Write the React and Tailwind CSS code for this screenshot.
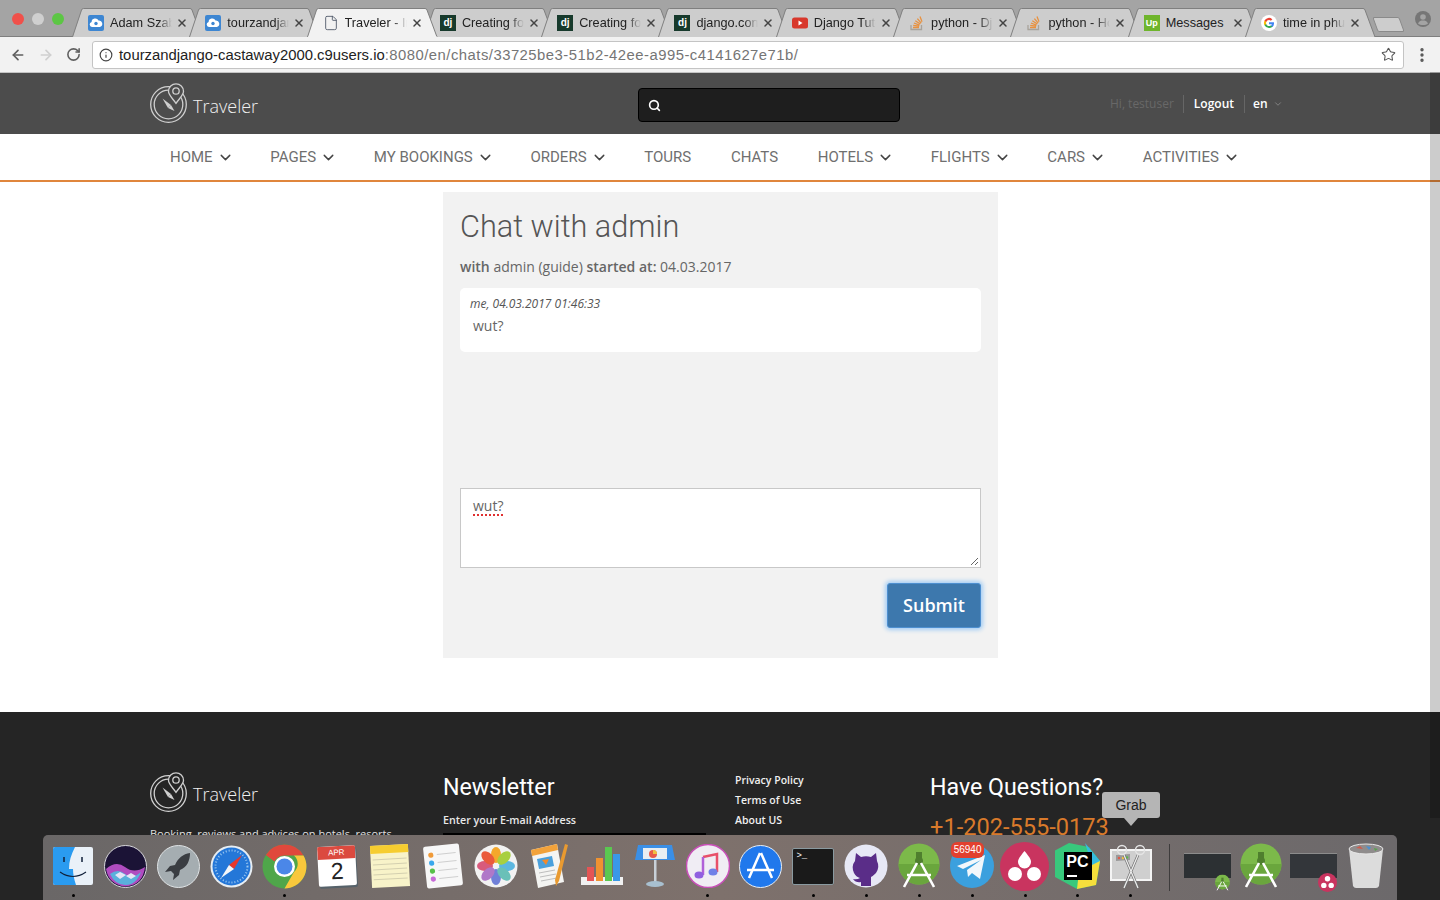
import { ChevronDown, Search, Star, EllipsisVertical, ArrowLeft, ArrowRight, RotateCw, Info, X, File } from "lucide-react";

const tabs = [
  { title: "Adam Szabo", icon: "cloud" },
  { title: "tourzandjango", icon: "cloud" },
  { title: "Traveler - Interface", icon: "file", active: true },
  { title: "Creating for", icon: "dj" },
  { title: "Creating for", icon: "dj" },
  { title: "django.contrib", icon: "dj" },
  { title: "Django Tutorial", icon: "yt" },
  { title: "python - Django", icon: "so" },
  { title: "python - How", icon: "so" },
  { title: "Messages", icon: "up", plain: true },
  { title: "time in phuket", icon: "g" },
];

const navItems = [
  { label: "HOME", caret: true },
  { label: "PAGES", caret: true },
  { label: "MY BOOKINGS", caret: true },
  { label: "ORDERS", caret: true },
  { label: "TOURS" },
  { label: "CHATS" },
  { label: "HOTELS", caret: true },
  { label: "FLIGHTS", caret: true },
  { label: "CARS", caret: true },
  { label: "ACTIVITIES", caret: true },
];

const TabIcon = ({ type }) => {
  if (type === "file") return <File className="w-4 h-4 text-gray-600" strokeWidth={1.3} />;
  if (type === "cloud")
    return (
      <svg width="16" height="16" viewBox="0 0 16 16">
        <rect width="16" height="16" rx="2" fill="#3d86d2" />
        <path d="M4 12a2.6 2.6 0 0 1-.4-5.1A3.6 3.6 0 0 1 10.5 5.6 3.3 3.3 0 0 1 12 12z" fill="#fff" />
        <circle cx="8" cy="8.5" r="1.7" fill="#3d86d2" />
      </svg>
    );
  if (type === "dj")
    return (
      <div className="w-4 h-4 bg-[#173a2c] text-white text-[10px] font-bold leading-4 text-center font-['Liberation_Sans',sans-serif]">
        dj
      </div>
    );
  if (type === "yt")
    return (
      <svg width="16" height="16" viewBox="0 0 16 16">
        <rect y="2.5" width="16" height="11" rx="2.5" fill="#d8382c" />
        <path d="M6.5 5.5v5l4-2.5z" fill="#fff" />
      </svg>
    );
  if (type === "so")
    return (
      <svg width="16" height="16" viewBox="0 0 16 16" fill="none" stroke="#e8913f" strokeWidth="1.3">
        <path d="M2 10v4.500h10.500V10" stroke="#a8a39b" />
        <path d="M4 12.500h6M4.200 10.300l6 .8M4.900 8l5.600 2.200M6.300 5.700l5 3.300M8.400 3.600l3.800 4.500M11 1.500l2 5.200" />
      </svg>
    );
  if (type === "up")
    return (
      <div className="w-4 h-4 bg-[#6fb52c] text-white text-[9px] font-bold leading-4 text-center font-['Liberation_Sans',sans-serif]">
        Up
      </div>
    );
  return (
    <svg width="16" height="16" viewBox="0 0 16 16">
      <circle cx="8" cy="8" r="8" fill="#fff" />
      <path d="M13 8.200c0-.4 0-.7-.1-1H8v2h2.800a2.400 2.400 0 0 1-1 1.600v1.300h1.700A5 5 0 0 0 13 8.200z" fill="#4285f4" />
      <path d="M8 13a5 5 0 0 0 3.500-1.200l-1.700-1.300a3 3 0 0 1-4.600-1.600H3.500v1.400A5 5 0 0 0 8 13z" fill="#34a853" />
      <path d="M5.200 8.900a3 3 0 0 1 0-1.900V5.600H3.500a5 5 0 0 0 0 4.700z" fill="#fbbc05" />
      <path d="M8 5a2.700 2.700 0 0 1 1.900.7l1.500-1.500A5 5 0 0 0 3.500 5.600L5.200 7A3 3 0 0 1 8 5z" fill="#ea4335" />
    </svg>
  );
};

const Tab = ({ tab }) => (
  <div className={`relative w-[117.300px] h-full shrink-0 flex items-center pl-[16px] ${tab.active ? "z-10" : ""}`}>
    <svg className="absolute left-0 top-0 w-[131px] h-[30px]" viewBox="0 0 131 30">
      <path
        d="M0.500 29 L9.500 2 Q10 0.500 11.500 0.500 H118 Q119.500 0.500 120 2 L130 29"
        fill={tab.active ? "#f2f2f2" : "#cdcdcd"}
        stroke="#7f7f7f"
        strokeWidth="1"
      />
      {tab.active && <rect x="1" y="28.500" width="129" height="2" fill="#f2f2f2" />}
    </svg>
    <div className="relative shrink-0 w-4 h-4 mr-[6px] flex items-center justify-center">
      <TabIcon type={tab.icon} />
    </div>
    <div className={`relative w-[62px] shrink-0 overflow-hidden whitespace-nowrap text-[12.700px] leading-[16px] pt-[1px] text-[#222] ${tab.plain ? "" : "[mask-image:linear-gradient(to_right,black_78%,transparent_100%)]"}`}>
      {tab.title}
    </div>
    <X className="relative w-[12px] h-[12px] ml-[4px] text-[#444] shrink-0" strokeWidth={3} />
  </div>
);

const Logo = ({ bg }) => (
  <svg width="38" height="40" viewBox="0 0 38 40" fill="none" stroke="#cfcfcf" strokeWidth="1.300">
    <circle cx="18.500" cy="21.500" r="17.800" />
    <circle cx="18.500" cy="21.500" r="14.300" />
    <path d="M26 0.800a7.500 7.500 0 0 0-7.500 7.500c0 4 4.500 7.500 7.500 12 3-4.500 7.500-8 7.500-12A7.500 7.500 0 0 0 26 0.800z" fill={bg} />
    <circle cx="26" cy="8" r="3.200" />
    <path d="M12.500 15.500l8.500 6.500-3 3z" fill="#cfcfcf" stroke="none" />
    <path d="M18 25l3-3 3.500 6z" fill="#cfcfcf" stroke="none" />
  </svg>
);

const DockApp = ({ children, dot }) => (
  <div className="relative w-[52.900px] h-[50px] shrink-0 flex items-center justify-center">
    {children}
    {dot && <span className="absolute left-[25px] bottom-[-6px] w-[3px] h-[3px] rounded-full bg-black" />}
  </div>
);

const androidIcon = (
  <svg width="42" height="46" viewBox="0 0 42 46">
    <circle cx="21" cy="21" r="20.500" fill="#7cb94a" />
    <path d="M21 41.500A20.500 20.500 0 0 1 .500 21H41.500A20.500 20.500 0 0 1 21 41.500z" fill="#6aa63d" />
    <rect x="18" y="9" width="6" height="6" fill="#4f7f2e" />
    <circle cx="21" cy="18" r="4" fill="#4f7f2e" />
    <path d="M19 20L6 44M23 20L36 44M9 32h24" stroke="#fff" strokeWidth="2.600" fill="none" />
  </svg>
);

const Dock = () => (
  <div className="absolute left-[43px] top-[835px] w-[1354px] h-[65px] rounded-t-[5px] bg-gradient-to-r from-[#6a6767] via-[#7e716c] to-[#6c696b] flex items-start pl-[3.500px] pt-[6px]">
    <DockApp dot>
      <svg width="40" height="38" viewBox="0 0 40 38">
        <rect width="40" height="38" rx="2" fill="#eaf1f8" />
        <path d="M0 2a2 2 0 0 1 2-2h20c-4 8-6 14-6 22h4c0 5 1 10 3 16H2a2 2 0 0 1-2-2z" fill="#2a9bf0" />
        <path d="M7 25q13 9 26 0" stroke="#11213a" strokeWidth="1.200" fill="none" />
        <path d="M11 10v5M29 10v5" stroke="#11213a" strokeWidth="1.500" />
      </svg>
    </DockApp>
    <DockApp>
      <svg width="43" height="43" viewBox="0 0 43 43">
        <circle cx="21.500" cy="21.500" r="21" fill="#1b1336" stroke="#d8d8dc" strokeWidth="1" />
        <path d="M2 24q10-9 19-2t20 0q-2 18-19.500 19.500Q5 40 2 24z" fill="#b04cc0" />
        <path d="M6 29q8-6 15 0t16-2q-5 13-15.500 13Q11 40 6 29z" fill="#5ab0dc" />
        <path d="M11 30l5-3 6 3-6 4zM22 31l5-3 5 3-5 3z" fill="#e6e4f6" />
      </svg>
    </DockApp>
    <DockApp>
      <svg width="43" height="43" viewBox="0 0 43 43">
        <circle cx="21.500" cy="21.500" r="21" fill="#a5adb1" stroke="#dfe3e5" strokeWidth="1" />
        <path d="M33 8c-7 1-12 5-15 12l-5 1-5 6 6-1 3 3-1 6 6-5 1-5c7-3 10-9 10-17z" fill="#3a3d42" />
      </svg>
    </DockApp>
    <DockApp>
      <svg width="43" height="43" viewBox="0 0 43 43">
        <circle cx="21.500" cy="21.500" r="21" fill="#e8eef3" />
        <circle cx="21.500" cy="21.500" r="19" fill="#2477d8" />
        <circle cx="21.500" cy="21.500" r="16" fill="none" stroke="#9cc8f0" strokeWidth="2" strokeDasharray="1 2" />
        <path d="M32 10L19 20l5 4z" fill="#e7372c" />
        <path d="M11 33l8-13 5 4z" fill="#f4f6f8" />
      </svg>
    </DockApp>
    <DockApp dot>
      <svg width="45" height="45" viewBox="0 0 45 45">
        <circle cx="22.500" cy="22.500" r="22" fill="#4fa64a" />
        <path d="M22.500.500A22 22 0 0 1 41.500 11.500H22.500a11 11 0 0 0-10 6L3.800 11A22 22 0 0 1 22.500.500z" fill="#e0483c" />
        <path d="M41.500 11.500A22 22 0 0 1 22.500 44.500l9.500-16.500a11 11 0 0 0 0-16.500z" fill="#f9c83c" />
        <circle cx="22.500" cy="22.500" r="10.500" fill="#fff" />
        <circle cx="22.500" cy="22.500" r="8" fill="#4b87e8" />
      </svg>
    </DockApp>
    <DockApp>
      <div className="w-[38px] h-[40px] -rotate-3 rounded-[2px] bg-white shadow-[1px_2px_0_#56626a] overflow-hidden flex flex-col items-center">
        <div className="w-full h-[13px] bg-[#db4a3f] text-white text-[8px] leading-[13px] text-center font-['Liberation_Sans',sans-serif]">APR</div>
        <div className="text-[#222] text-[23px] leading-[25px] font-['Liberation_Sans',sans-serif]">2</div>
      </div>
    </DockApp>
    <DockApp>
      <svg width="40" height="44" viewBox="0 0 40 44" className="-rotate-3">
        <rect x="1" y="1" width="38" height="42" fill="#f8f3c9" />
        <rect x="1" y="1" width="38" height="8" fill="#f6cd30" />
        <path d="M3 15h34M3 20h34M3 25h34M3 30h34M3 35h34" stroke="#d4d0b0" strokeWidth="1" />
      </svg>
    </DockApp>
    <DockApp>
      <svg width="38" height="44" viewBox="0 0 38 44" className="-rotate-6">
        <rect x="1" y="1" width="36" height="42" rx="2" fill="#f7f7f7" />
        <circle cx="8" cy="10" r="2.600" fill="#f09a38" />
        <circle cx="8" cy="18" r="2.600" fill="#3aa8ec" />
        <circle cx="8" cy="26" r="2.600" fill="#58c04a" />
        <circle cx="8" cy="34" r="2.600" fill="#c86ad8" />
        <path d="M14 10h19M14 18h19M14 26h19M14 34h19" stroke="#cfcfcf" />
      </svg>
    </DockApp>
    <DockApp>
      <svg width="44" height="44" viewBox="0 0 44 44">
        <circle cx="22" cy="22" r="21.500" fill="#f2f2f2" />
        <ellipse cx="22" cy="11" rx="5" ry="8" fill="#f4a72c" />
        <ellipse cx="33" cy="22" rx="8" ry="5" fill="#5cb7e0" />
        <ellipse cx="22" cy="33" rx="5" ry="8" fill="#7080d8" />
        <ellipse cx="11" cy="22" rx="8" ry="5" fill="#d85a7c" />
        <ellipse cx="30" cy="14" rx="5" ry="8" transform="rotate(45 30 14)" fill="#a8cf40" />
        <ellipse cx="30" cy="30" rx="5" ry="8" transform="rotate(-45 30 30)" fill="#6ac0b8" />
        <ellipse cx="14" cy="30" rx="5" ry="8" transform="rotate(45 14 30)" fill="#b078c8" />
        <ellipse cx="14" cy="14" rx="5" ry="8" transform="rotate(-45 14 14)" fill="#ea5a3c" />
      </svg>
    </DockApp>
    <DockApp>
      <svg width="40" height="46" viewBox="0 0 40 46">
        <path d="M2 7l26-6 7 38-26 6z" fill="#f4f4f2" />
        <path d="M2 7l26-6 1 6L3 13z" fill="#f2a23a" />
        <path d="M8 16l15-3 2 10-15 3z" fill="#4aa0dc" />
        <path d="M13 17l7-1-3 6z" fill="#f08a2c" />
        <path d="M10 30l16-3M11 34l16-3M12 38l16-3" stroke="#bdbdbd" strokeWidth="1" />
        <path d="M36 1l3 1-9 36-3 5-1-6z" fill="#e99a30" />
      </svg>
    </DockApp>
    <DockApp>
      <svg width="42" height="42" viewBox="0 0 42 42">
        <rect x="0" y="32" width="42" height="8" fill="#f1f1f1" />
        <rect x="6" y="22" width="7" height="14" fill="#e55555" />
        <rect x="15" y="13" width="7" height="23" fill="#f09230" />
        <rect x="24" y="2" width="7" height="34" fill="#5ac850" />
        <rect x="32" y="9" width="7" height="27" fill="#3a98e8" />
      </svg>
    </DockApp>
    <DockApp>
      <svg width="42" height="44" viewBox="0 0 42 44">
        <path d="M4 1h34l3 15H1z" fill="#3a8fe6" />
        <rect x="9" y="4" width="24" height="11" fill="#e8eef2" />
        <circle cx="19" cy="10" r="4" fill="#e85a4a" />
        <path d="M19 10V6a4 4 0 0 1 4 4z" fill="#f0c040" />
        <rect x="20" y="16" width="2.500" height="22" fill="#c8d0d8" />
        <ellipse cx="21" cy="40" rx="9" ry="3" fill="#a8c0d0" />
      </svg>
    </DockApp>
    <DockApp dot>
      <svg width="44" height="44" viewBox="0 0 44 44">
        <circle cx="22" cy="22" r="21.500" fill="#f0edf4" stroke="#c850b8" strokeWidth="1.500" />
        <path d="M17 13l14-3v18" fill="none" stroke="#e8506a" strokeWidth="2.500" />
        <path d="M17 13v18" stroke="#b060d8" strokeWidth="2.500" />
        <ellipse cx="13" cy="31" rx="4.500" ry="3.500" fill="#9060e0" />
        <ellipse cx="27" cy="28" rx="4.500" ry="3.500" fill="#7080e8" />
      </svg>
    </DockApp>
    <DockApp>
      <svg width="43" height="43" viewBox="0 0 43 43">
        <circle cx="21.500" cy="21.500" r="21" fill="#2078ec" stroke="#e8eef4" strokeWidth="1" />
        <path d="M21 8L10 33M22 8l11 25M8 25h27" stroke="#fff" strokeWidth="2.500" fill="none" />
      </svg>
    </DockApp>
    <DockApp dot>
      <div className="w-[42px] h-[37px] rounded-[2px] bg-[#1a1a1a] border border-[#8a9aa0] px-[3px] text-white text-[9px] leading-[14px] font-['Liberation_Mono',monospace]">
        &gt;_
      </div>
    </DockApp>
    <DockApp dot>
      <svg width="44" height="44" viewBox="0 0 44 44">
        <circle cx="22" cy="22" r="21.500" fill="#e7e8f5" />
        <path d="M12 9l5 4q5-1.500 10 0l5-4 1 8q3 6-1 12-3 3-5 4v9h-10v-4q-5 1-8-3 4 1 7-1-4-1-6-5-3-7 1-12z" fill="#5a2d88" />
      </svg>
    </DockApp>
    <DockApp dot>{androidIcon}</DockApp>
    <DockApp dot>
      <svg width="44" height="44" viewBox="0 0 44 44">
        <circle cx="22" cy="22" r="22" fill="#3ba0de" />
        <path d="M7 22l28-11-5 24-8-6-4 4-1-7 14-10-18 9z" fill="#f2f7fb" />
      </svg>
      <span className="absolute left-[5px] top-[1px] px-[3px] h-[16px] rounded-[6px] bg-[#e2402f] text-white text-[10px] leading-[16px] font-['Liberation_Sans',sans-serif]">
        56940
      </span>
    </DockApp>
    <DockApp dot>
      <svg width="49" height="49" viewBox="0 0 49 49">
        <circle cx="24.500" cy="24.500" r="24.500" fill="#c9345f" />
        <path d="M24.500 9c5 6 6.500 8.500 6.500 11a6.500 6.500 0 0 1-13 0c0-2.500 1.500-5 6.500-11z" fill="#fff" />
        <circle cx="15" cy="32" r="7" fill="#fff" />
        <circle cx="34" cy="32" r="7" fill="#fff" />
      </svg>
    </DockApp>
    <DockApp dot>
      <div className="relative w-[45px] h-[46px]">
        <svg className="absolute inset-0" width="45" height="46" viewBox="0 0 45 46">
          <path d="M14 0l20 4 11 14-4 24-19 4-22-12-1-26z" fill="#38c87c" />
          <path d="M26 12l19 6-4 24-19 4z" fill="#f6df3c" />
          <path d="M30 0l15 18-8 4z" fill="#36bce0" />
        </svg>
        <div className="absolute left-[9px] top-[9px] w-[28px] h-[28px] bg-black text-white text-[16px] font-bold leading-[20px] pl-[2px] font-['Liberation_Sans',sans-serif]">
          PC
          <span className="absolute left-[3px] bottom-[3px] w-[10px] h-[2px] bg-white" />
        </div>
      </div>
    </DockApp>
    <DockApp dot>
      <svg width="42" height="46" viewBox="0 0 42 46">
        <rect x="1" y="7" width="40" height="30" fill="#cfcfcf" stroke="#f4f4f4" strokeWidth="2" />
        <path d="M6 12l14-1v6l-14 1z" fill="#9a9a9a" />
        <circle cx="9" cy="15" r="1.200" fill="#e05a4a" />
        <circle cx="13" cy="15" r="1.200" fill="#f0c040" />
        <circle cx="17" cy="14.500" r="1.200" fill="#58c04a" />
        <path d="M14 12l14 33M28 12L14 45" stroke="#6e6e6e" strokeWidth="2.600" />
        <path d="M14 12l14 33M28 12L14 45" stroke="#ececec" strokeWidth="1.300" />
        <circle cx="12" cy="7" r="4.500" fill="none" stroke="#e4e4e4" strokeWidth="1.500" />
        <circle cx="30" cy="7" r="4.500" fill="none" stroke="#e4e4e4" strokeWidth="1.500" />
      </svg>
    </DockApp>
    <div className="w-px h-[47px] bg-[#3e3c3c] ml-[12px] mr-[14px] mt-[3px] shrink-0" />
    <div className="relative w-[47px] h-[50px] shrink-0">
      <div className="absolute left-0 top-[12px] w-[47px] h-[25px] bg-[#2c3033] border-t border-[#8c8c8c]" />
      <div className="absolute right-[1px] bottom-0 scale-[0.36] origin-bottom-right">{androidIcon}</div>
    </div>
    <div className="w-[53px] h-[50px] shrink-0 flex items-center justify-center ml-[3px]">{androidIcon}</div>
    <div className="relative w-[47px] h-[50px] shrink-0 ml-[3px]">
      <div className="absolute left-0 top-[12px] w-[47px] h-[25px] bg-[#33363a] border-t border-[#8c8c8c]" />
      <svg className="absolute right-0 bottom-[-1px]" width="19" height="19" viewBox="0 0 49 49">
        <circle cx="24.500" cy="24.500" r="24.500" fill="#c9345f" />
        <circle cx="24.500" cy="15" r="7" fill="#fff" />
        <circle cx="15" cy="32" r="7" fill="#fff" />
        <circle cx="34" cy="32" r="7" fill="#fff" />
      </svg>
    </div>
    <div className="w-[45px] h-[50px] shrink-0 flex items-center justify-center ml-[6px]">
      <svg width="36" height="46" viewBox="0 0 36 46">
        <path d="M1 6h34l-4 37q-1 2-3 2H8q-2 0-3-2z" fill="#dcdcdc" />
        <ellipse cx="18" cy="6" rx="17" ry="5" fill="#8f8c8c" stroke="#e8e8e8" />
        <path d="M8 5l4-2 3 3z" fill="#cf5a4a" />
        <path d="M18 3l5 1-2 3z" fill="#4a90d0" />
        <path d="M26 5l4 1-3 2z" fill="#58a050" />
      </svg>
    </div>
  </div>
);

export default function App() {
  return (
    <div className="relative w-[1440px] h-[900px] overflow-hidden bg-white font-['Open_Sans',sans-serif]">
      {/* browser tabs */}
      <div className="h-[37px] bg-[#a4a4a4] border-b border-[#7f7f7f] flex items-start relative">
        <div className="flex items-center gap-[8px] w-[72px] pl-[12px] pt-[13px] shrink-0">
          <span className="w-3 h-3 rounded-full bg-[#f0504a]" />
          <span className="w-3 h-3 rounded-full bg-[#cfcfcf]" />
          <span className="w-3 h-3 rounded-full bg-[#5cc644]" />
        </div>
        <div className="flex h-[29px] mt-[8px] font-['Liberation_Sans',sans-serif]">
          {tabs.map((tab, i) => (
            <Tab key={i} tab={tab} />
          ))}
          <div className="w-[27px] h-[15px] bg-[#cdcdcd] border border-[#8a8a8a] rounded-[2px] skew-x-[20deg] mt-[9px] ml-[13px] shrink-0" />
        </div>
        <svg className="absolute left-[1415px] top-[11px]" width="16" height="16" viewBox="0 0 16 16">
          <circle cx="8" cy="8" r="8" fill="#767676" />
          <circle cx="8" cy="6" r="2.800" fill="#a4a4a4" />
          <path d="M3 12.500c1-2.500 3-3 5-3s4 .5 5 3c-1.200 1-3 1.500-5 1.500s-3.800-.5-5-1.500z" fill="#a4a4a4" />
        </svg>
      </div>

      {/* address bar */}
      <div className="h-[35px] bg-[#f2f2f2] flex items-center pl-[10px] font-['Liberation_Sans',sans-serif]">
        <ArrowLeft className="w-4 h-4 text-[#5f5f5f]" strokeWidth={2.500} />
        <ArrowRight className="w-4 h-4 text-[#cfcfcf] ml-[12px]" strokeWidth={2.500} />
        <RotateCw className="w-[15px] h-[15px] text-[#5f5f5f] ml-[12px]" strokeWidth={2.500} />
        <div className="ml-[11px] w-[1312px] h-[28px] bg-white border border-[#c4c4c4] rounded-[3px] flex items-center pl-[6px] pr-[7px]">
          <Info className="w-[14px] h-[14px] text-[#444]" />
          <div className="ml-[6px] pt-[1px] text-[14.850px] text-[#757575] whitespace-nowrap grow">
            <span className="text-[#222]">tourzandjango-castaway2000.c9users.io</span>
            <span className="tracking-[0.48px]">:8080/en/chats/33725be3-51b2-42ee-a995-c4141627e71b/</span>
          </div>
          <Star className="w-[15px] h-[15px] text-[#555]" strokeWidth={1.700} />
        </div>
        <EllipsisVertical className="w-[18px] h-[18px] text-[#555] ml-[9px]" strokeWidth={2.500} />
      </div>

      {/* page */}
      <div className="h-[62px] bg-[#4c4c4c] border-t border-[#c4c4c4] flex items-center pl-[150px]">
        <div className="flex items-center w-[488px] -mt-[2px]">
          <Logo bg="#4c4c4c" />
          <span className="ml-[5px] text-[18px] font-light text-[#f0f0f0] mt-[8px]">Traveler</span>
        </div>
        <div className="w-[262px] h-[34px] bg-[#1e1e1e] border border-black rounded-[4px] flex items-center pl-[9px] mt-[3px]">
          <Search className="w-[13px] h-[13px] text-white" strokeWidth={3} />
        </div>
        <div className="ml-[210px] flex items-center text-[12px] mt-[1px]">
          <span className="text-[#686868] pr-[9px]">Hi, testuser</span>
          <span className="text-white font-semibold px-[10px] border-l border-r border-[#666]">Logout</span>
          <span className="text-white font-semibold pl-[8px]">en</span>
          <ChevronDown className="w-[10px] h-[10px] text-[#8a8a8a] ml-[5px]" />
        </div>
      </div>
      <div className="h-[48px] border-b-2 border-[#e0863c] flex items-center pl-[170px] gap-[39.700px] font-['Roboto',sans-serif] text-[15px] text-[#6f6f6f]">
        {navItems.map((item) => (
          <div key={item.label} className="flex items-center gap-[4px]">
            <span>{item.label}</span>
            {item.caret && <ChevronDown className="w-[17px] h-[17px] text-[#444] -mr-[3px]" strokeWidth={2} />}
          </div>
        ))}
      </div>

      {/* chat */}
      <div className="ml-[443px] mt-[10px] w-[555px] h-[466px] bg-[#f2f2f2] px-[17px] pt-[15px]">
        <h1 className="font-['Roboto',sans-serif] font-light text-[30.700px] leading-[40px] text-[#555]">Chat with admin</h1>
        <p className="mt-[10px] text-[14px] leading-[20px] text-[#666]">
          <b className="font-semibold">with</b> admin (guide) <b className="font-semibold">started at:</b> 04.03.2017
        </p>
        <div className="mt-[11px] w-[521px] h-[64px] bg-white rounded-[5px] px-[10px] pt-[7px]">
          <div className="text-[12px] leading-[18px] italic text-[#555]">me, 04.03.2017 01:46:33</div>
          <div className="mt-[3px] pl-[3px] text-[14px] leading-[20px] text-[#666]">wut?</div>
        </div>
        <div className="mt-[136px] relative w-[521px] h-[80px] bg-white border border-[#c8c8c8] px-[12px] pt-[7px] text-[14px] leading-[20px] text-[#666]">
          <span className="inline-block leading-[17px] border-b-2 border-dotted border-[#e03030]">wut?</span>
          <svg className="absolute right-[1px] bottom-[1px]" width="9" height="9" viewBox="0 0 9 9" stroke="#666">
            <path d="M1 8l7-7M5 8l3-3" />
          </svg>
        </div>
        <div className="mt-[15px] flex justify-end">
          <button className="w-[94px] h-[45px] bg-[#3d78ad] rounded-[3px] border border-[#4d8fd0] shadow-[0_0_4px_2px_#a3cdf4] text-white text-[18px] font-semibold">
            Submit
          </button>
        </div>
      </div>

      {/* footer */}
      <div className="mt-[54px] h-[188px] bg-[#252525] pt-[60px] pl-[150px] flex text-white">
        <div className="w-[293px]">
          <div className="flex items-center">
            <Logo bg="#252525" />
            <span className="ml-[5px] text-[18px] font-light text-[#f0f0f0] mt-[5px]">Traveler</span>
          </div>
          <p className="mt-[13px] text-[11px] leading-[18px] text-[#e0e0e0] whitespace-nowrap">Booking, reviews and advices on hotels, resorts</p>
        </div>
        <div className="w-[292px]">
          <h3 className="font-['Roboto',sans-serif] text-[23.200px] leading-[30px]">Newsletter</h3>
          <div className="mt-[9px] text-[10.700px] font-semibold leading-[18px] text-[#e8e8e8]">Enter your E-mail Address</div>
          <div className="mt-[4px] w-[263px] h-[2px] bg-black" />
        </div>
        <div className="w-[195px] text-[10.500px] font-semibold leading-[20px] -mt-[2px] text-[#f0f0f0]">
          <div>Privacy Policy</div>
          <div>Terms of Use</div>
          <div>About US</div>
        </div>
        <div>
          <h3 className="font-['Roboto',sans-serif] text-[23.200px] leading-[30px]">Have Questions?</h3>
          <div className="mt-[10px] font-['Roboto',sans-serif] text-[23.600px] leading-[30px] text-[#d97a2b]">+1-202-555-0173</div>
        </div>
      </div>

      {/* scrollbar overlay */}
      <div className="absolute left-[1430px] top-[72px] w-[10px] h-[746px] bg-black/20" />

      {/* dock tooltip */}
      <div className="absolute left-[1102px] top-[792px] w-[58px] h-[26px] rounded-[3px] bg-[#b5b5b5] text-[#222] text-[14px] leading-[26px] text-center font-['Liberation_Sans',sans-serif]">
        Grab
        <span className="absolute left-[22px] top-[26px] w-0 h-0 border-x-[7px] border-x-transparent border-t-[8px] border-t-[#b5b5b5]" />
      </div>
      <Dock />
    </div>
  );
}
